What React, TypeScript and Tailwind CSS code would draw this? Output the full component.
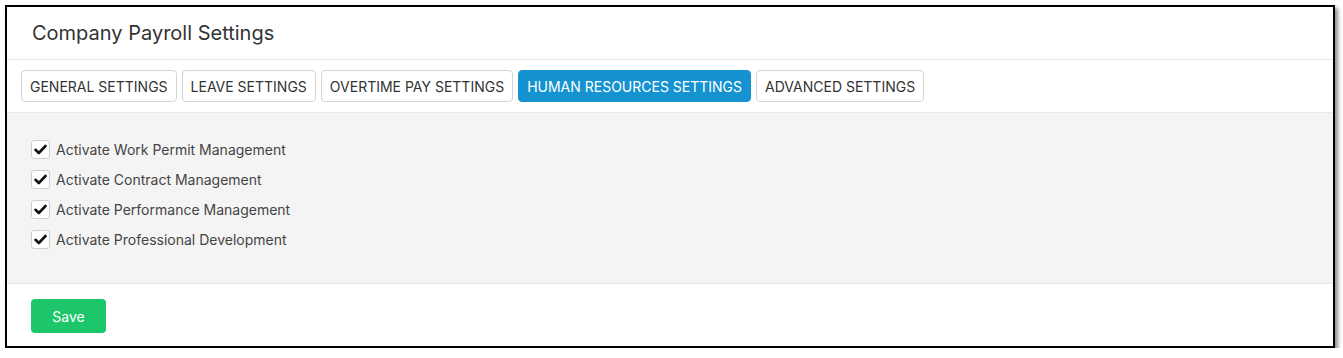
import { FC } from "react";

const tabs = [
  "General Settings",
  "Leave Settings",
  "Overtime Pay Settings",
  "Human Resources Settings",
  "Advanced Settings",
];

const options = [
  "Activate Work Permit Management",
  "Activate Contract Management",
  "Activate Performance Management",
  "Activate Professional Development",
];

const CheckBox: FC = () => (
  <span className="w-[19px] h-[19px] rounded-[3px] border border-[#cfcfcf] bg-white flex items-center justify-center">
    <svg width="13" height="11" viewBox="0 0 13 11">
      <path d="M1.5 5.8 L4.8 9 L11.5 2" fill="none" stroke="#111" strokeWidth="2.6" strokeLinecap="round" strokeLinejoin="round" />
    </svg>
  </span>
);

const App: FC = () => {
  return (
    <div className="pt-[5px] pl-[5px] font-['Inter',sans-serif]">
      <div className="w-[1330px] border-2 border-black bg-white shadow-[3px_3px_4px_rgba(0,0,0,0.45)]">
        <div className="h-[53px] flex items-center pl-[25px] border-b border-[#e8e8e8]">
          <h1 className="text-[20px] text-[#333]">Company Payroll Settings</h1>
        </div>

        <div className="flex gap-[5px] pl-[14px] py-[10px] border-b border-[#e8e8e8]">
          {tabs.map((t) => {
            const active = t === "Human Resources Settings";
            return (
              <button
                key={t}
                className={
                  active
                    ? "h-[32px] px-[8px] rounded-[4px] border border-[#1592d0] bg-[#1592d0] text-white text-[14px] uppercase"
                    : "h-[32px] px-[8px] rounded-[4px] border border-[#d4d4d4] bg-white text-[#333] text-[14px] uppercase"
                }
              >
                {t}
              </button>
            );
          })}
        </div>

        <div className="bg-[#f4f4f4] pt-[27px] pb-[34px] pl-[24px] flex flex-col gap-[11px]">
          {options.map((o) => (
            <label key={o} className="flex items-center gap-[6px] h-[19px]">
              <CheckBox />
              <span className="text-[14px] text-[#444]">{o}</span>
            </label>
          ))}
        </div>

        <div className="border-t border-[#e8e8e8] pt-[15px] pb-[13px] pl-[24px]">
          <button className="h-[34px] w-[75px] rounded-[4px] bg-[#1dc66b] text-white text-[14px]">
            Save
          </button>
        </div>
      </div>
    </div>
  );
};

export default App;
